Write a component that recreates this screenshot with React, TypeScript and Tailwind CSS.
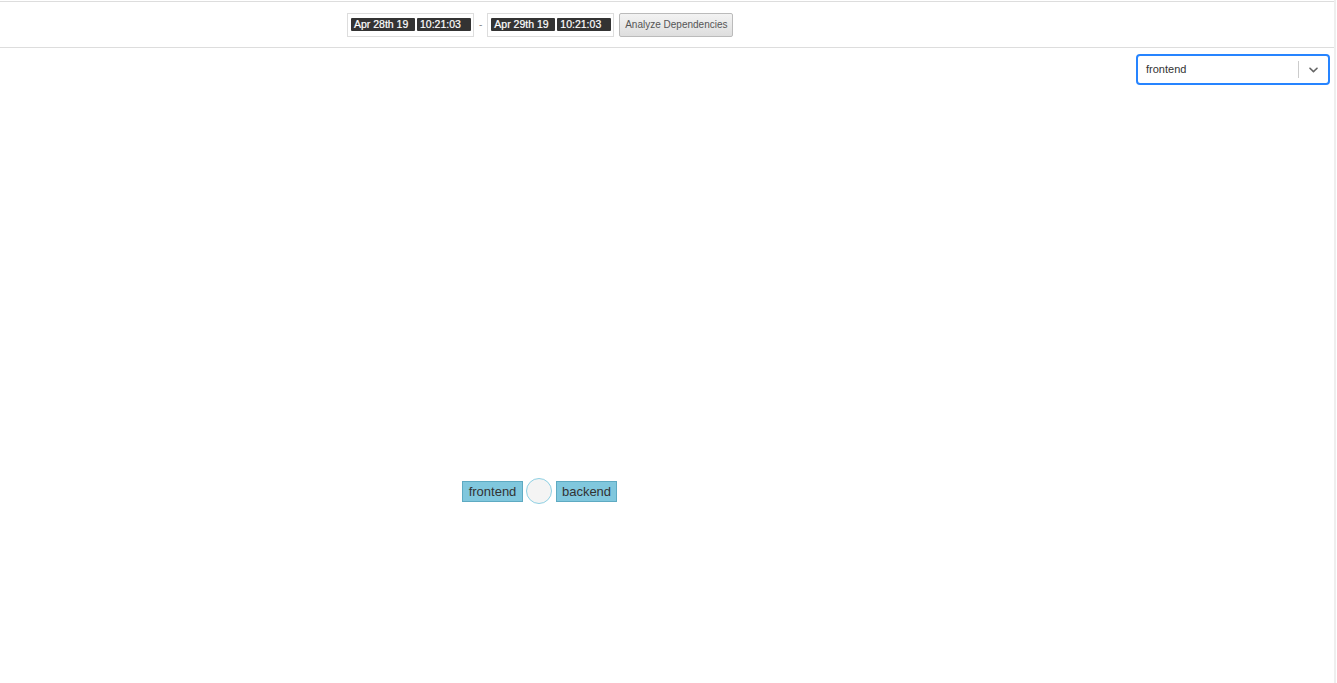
import React from "react";

function DateBox({ date, time }: { date: string; time: string }) {
  return (
    <div className="flex h-[24px] items-center gap-[2px] border border-[#dddddd] bg-white pl-[3px] pr-[2px]">
      <span className="flex h-[13px] w-[64px] items-center rounded-[1px] bg-[#333333] pl-[3px] text-[10.5px] leading-none text-white [-webkit-text-stroke:0.2px_white]">
        {date}
      </span>
      <span className="flex h-[13px] w-[54px] items-center rounded-[1px] bg-[#333333] pl-[3px] text-[10.5px] leading-none text-white [-webkit-text-stroke:0.2px_white]">
        {time}
      </span>
    </div>
  );
}

export default function App() {
  return (
    <div
      className="relative h-[683px] w-[1336px] border-r-2 border-[#eeeeee] bg-white"
      style={{ fontFamily: '"Liberation Sans", Arial, sans-serif' }}
    >
      <div className="pt-px">
        <div className="flex h-[47px] items-center border-y border-[#dddddd] pl-[347px]">
          <DateBox date="Apr 28th 19" time="10:21:03" />
          <span className="mx-[5px] text-[10px] text-[#888888]">-</span>
          <DateBox date="Apr 29th 19" time="10:21:03" />
          <button className="ml-[5px] h-[24px] w-[114px] rounded-[2px] border border-[#bbbbbb] bg-gradient-to-b from-[#f3f3f3] to-[#dedede] text-[10px] text-[#555555]">
            Analyze Dependencies
          </button>
        </div>
      </div>
      <div className="flex justify-end pr-[4px] pt-[6px]">
        <div className="flex h-[31px] w-[194px] items-center rounded-[4px] border-2 border-[#2684ff] bg-white">
          <span className="flex-1 pl-[8px] text-[11px] text-[#333333]">frontend</span>
          <span className="h-[17px] w-px bg-[#cccccc]" />
          <span className="flex w-[29px] items-center justify-center">
            <svg width="15" height="15" viewBox="0 0 20 20" fill="#666666">
              <path d="M4.516 7.548c0.436-0.446 1.043-0.481 1.576 0l3.908 3.747 3.908-3.747c0.533-0.481 1.141-0.446 1.574 0 0.436 0.445 0.408 1.197 0 1.615-0.406 0.418-4.695 4.502-4.695 4.502-0.217 0.223-0.502 0.335-0.787 0.335s-0.57-0.112-0.789-0.335c0 0-4.287-4.084-4.695-4.502s-0.436-1.17 0-1.615z" />
            </svg>
          </span>
        </div>
      </div>
      <div className="absolute left-[462px] top-[481px] flex h-[21px] w-[61px] items-center justify-center border border-[#5eaac2] bg-[#80c7dd] text-[13px] text-[#333333]">
        frontend
      </div>
      <div className="absolute left-[526px] top-[478px] h-[26px] w-[26px] rounded-full border-[1.5px] border-[#8fd0e3] bg-[#f4f4f4]" />
      <div className="absolute left-[556px] top-[481px] flex h-[21px] w-[61px] items-center justify-center border border-[#5eaac2] bg-[#80c7dd] text-[13px] text-[#333333]">
        backend
      </div>
    </div>
  );
}
